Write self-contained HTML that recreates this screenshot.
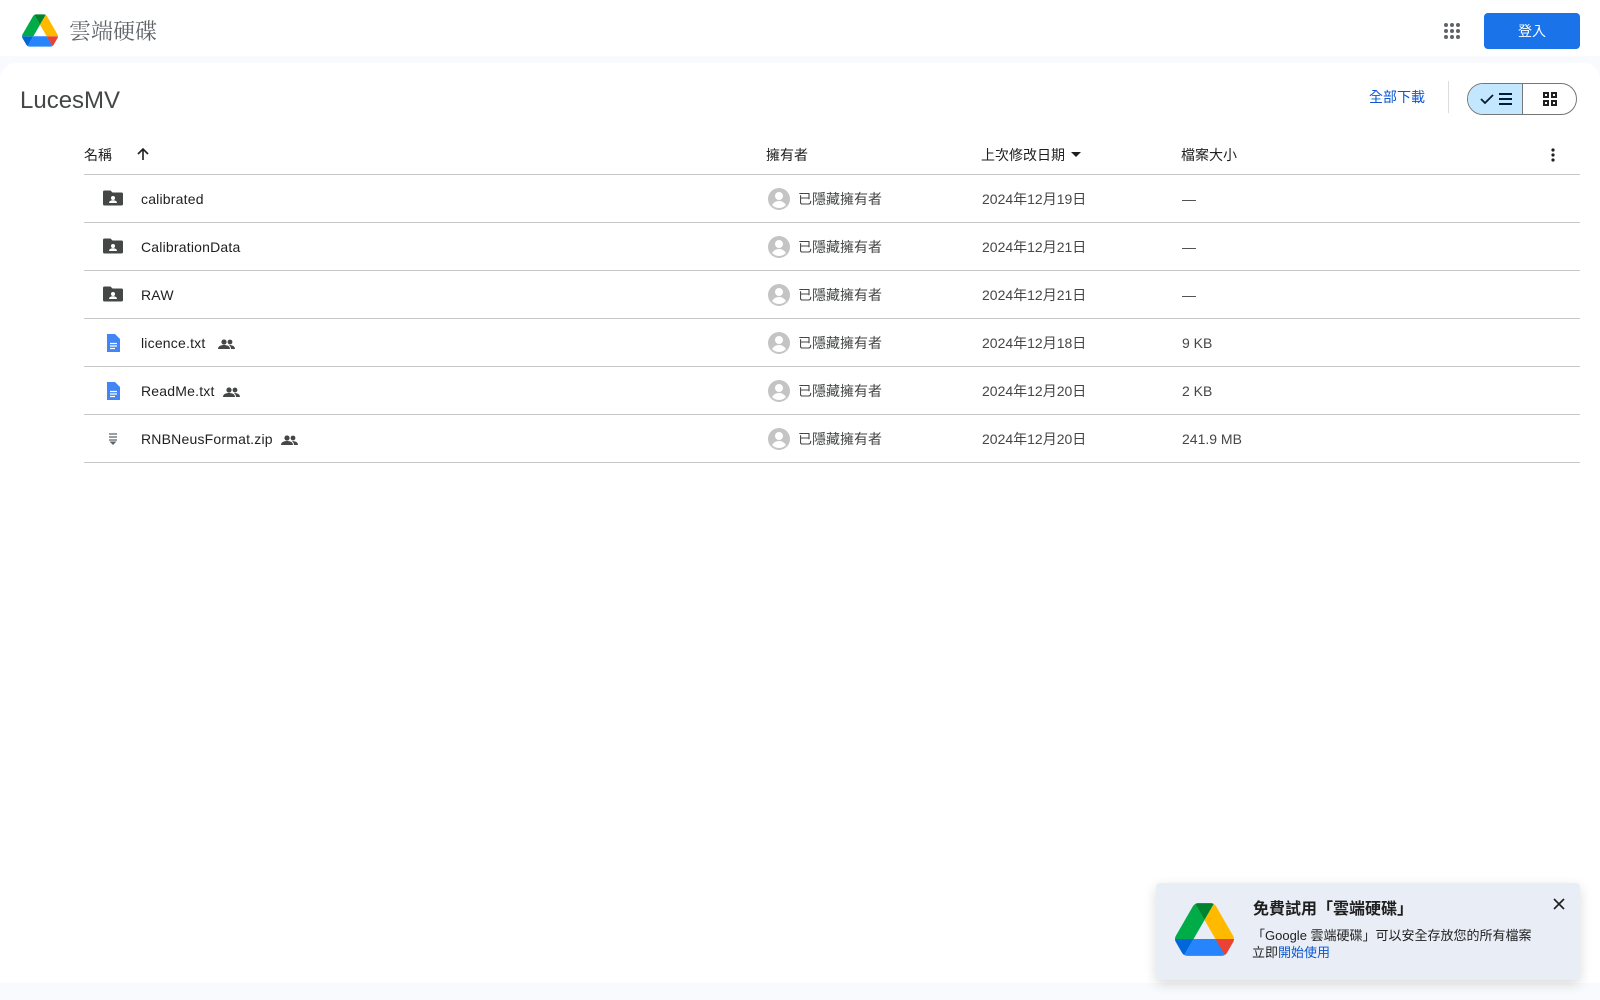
<!DOCTYPE html>
<html><head><meta charset="utf-8"><style>
*{margin:0;padding:0;box-sizing:border-box}
body{width:1600px;height:1000px;background:#fff;font-family:"Liberation Sans","Noto Sans CJK TC",sans-serif;color:#1f1f1f;position:relative;overflow:hidden}
.abs{position:absolute}
.bg{position:absolute;left:0;top:56px;width:1600px;height:944px;background:#f8fafd}
.card{position:absolute;left:0;top:63px;width:1600px;height:920px;background:#fff;border-radius:16px 16px 0 0}
.t{position:absolute;font-size:14px;white-space:nowrap;line-height:20px}
.line{position:absolute;left:84px;width:1496px;height:1px;background:#c7c7c7}
.g{color:#444746}
.n{color:#1f1f1f;letter-spacing:.2px}
</style></head><body>
<div class="bg"></div>
<svg class="abs" style="left:22px;top:14px" width="36" height="33" viewBox="0 0 87.3 78">
<path d="m6.6 66.85 3.85 6.65c.8 1.4 1.95 2.5 3.3 3.3l13.75-23.8h-27.5c0 1.55.4 3.1 1.2 4.5z" fill="#0066da"/>
<path d="m43.65 25-13.75-23.8c-1.35.8-2.5 1.9-3.3 3.3l-25.4 44a9.06 9.06 0 0 0 -1.2 4.5h27.5z" fill="#00ac47"/>
<path d="m73.55 76.8c1.35-.8 2.5-1.9 3.3-3.3l1.6-2.75 7.65-13.25c.8-1.4 1.2-2.95 1.2-4.5h-27.502l5.852 11.5z" fill="#ea4335"/>
<path d="m43.65 25 13.75-23.8c-1.35-.8-2.9-1.2-4.5-1.2h-18.5c-1.6 0-3.15.45-4.5 1.2z" fill="#00832d"/>
<path d="m59.8 53h-32.3l-13.75 23.8c1.35.8 2.9 1.2 4.5 1.2h50.8c1.6 0 3.15-.45 4.5-1.2z" fill="#2684fc"/>
<path d="m73.4 26.5-12.7-22c-.8-1.4-1.95-2.5-3.3-3.3l-13.75 23.8 16.150 28h27.45c0-1.55-.4-3.1-1.2-4.5z" fill="#ffba00"/>
</svg>
<div class="t" style="left:69px;top:16px;font-size:22px;line-height:30px;color:#5f6368;font-family:'Noto Serif CJK SC',serif">雲端硬碟</div>
<svg class="abs" style="left:1443px;top:22px" width="18" height="18" viewBox="0 0 18 18" fill="#5f6368">
<circle cx="3" cy="3" r="2"/><circle cx="9" cy="3" r="2"/><circle cx="15" cy="3" r="2"/><circle cx="3" cy="9" r="2"/><circle cx="9" cy="9" r="2"/><circle cx="15" cy="9" r="2"/><circle cx="3" cy="15" r="2"/><circle cx="9" cy="15" r="2"/><circle cx="15" cy="15" r="2"/></svg>
<div class="abs" style="left:1484px;top:13px;width:96px;height:36px;background:#1a73e8;border-radius:4px;color:#fff;font-size:14px;text-align:center;line-height:36px">登入</div>
<div class="card"></div>
<div class="t" style="left:20px;top:86px;font-size:24px;line-height:30px;color:#444746">LucesMV</div>
<div class="t" style="left:1369px;top:87px;color:#0b57d0">全部下載</div>
<div class="abs" style="left:1448px;top:81px;width:1px;height:32px;background:#dadce0"></div>
<div class="abs" style="left:1467px;top:83px;width:110px;height:32px;border:1px solid #747775;border-radius:16px;overflow:hidden">
<div class="abs" style="left:0;top:0;width:55px;height:30px;background:#c2e7ff;border-right:1px solid #747775"></div>
<svg class="abs" style="left:11px;top:7px" width="34" height="16" viewBox="0 0 34 16"><path d="M2 8l4 4 8-8" stroke="#001d35" stroke-width="1.8" fill="none"/><path d="M20 3h13M20 8h13M20 13h13" stroke="#001d35" stroke-width="2"/></svg>
<svg class="abs" style="left:75px;top:8px" width="14" height="14" viewBox="0 0 14 14" fill="none" stroke="#1f1f1f" stroke-width="2"><rect x="1" y="1" width="4" height="4"/><rect x="9" y="1" width="4" height="4"/><rect x="1" y="9" width="4" height="4"/><rect x="9" y="9" width="4" height="4"/></svg>
</div>
<div class="t" style="left:84px;top:145px">名稱</div>
<svg class="abs" style="left:135px;top:146px" width="16" height="16" viewBox="0 0 16 16"><path d="M8 14V3M3 8l5-5 5 5" stroke="#1f1f1f" stroke-width="1.6" fill="none"/></svg>
<div class="t" style="left:766px;top:145px">擁有者</div>
<div class="t" style="left:981px;top:145px">上次修改日期</div>
<svg class="abs" style="left:1071px;top:152px" width="10" height="6"><path d="M0 0h10L5 5z" fill="#1f1f1f"/></svg>
<div class="t" style="left:1181px;top:145px">檔案大小</div>
<svg class="abs" style="left:1551px;top:147px" width="4" height="16"><circle cx="2" cy="3" r="1.6" fill="#1f1f1f"/><circle cx="2" cy="8" r="1.6" fill="#1f1f1f"/><circle cx="2" cy="13" r="1.6" fill="#1f1f1f"/></svg>
<div class="line" style="top:174px"></div>

<svg width="0" height="0" style="position:absolute"><defs>
<g id="folder"><path d="M1 4a1.5 1.5 0 0 1 1.5-1.5h6l2 2h9a1.5 1.5 0 0 1 1.5 1.5v10a1.5 1.5 0 0 1-1.5 1.5h-17a1.5 1.5 0 0 1-1.5-1.5z" fill="#444746"/><circle cx="11" cy="10" r="2" fill="#fff"/><path d="M7 15c0-2 2-2.8 4-2.8s4 .8 4 2.8z" fill="#fff"/></g>
<g id="doc"><path d="M5 2h8l5 5v13H5z" fill="#4285f4"/><path d="M8 11.5h7M8 14h7M8 16.5h5" stroke="#fff" stroke-width="1.3"/></g>
<g id="zip"><path d="M7 6h8M7 9h8M7 12h8" stroke="#5f6368" stroke-width="1.3"/><path d="M7.5 13.5h7l-3.5 3.5z" fill="#5f6368"/></g>
<g id="av"><circle cx="11" cy="11" r="11" fill="#c4c4c4"/><circle cx="11" cy="8" r="4" fill="#fff"/><path d="M4 17c2-3 4.5-4 7-4s5 1 7 4c-2 2-4.5 3-7 3s-5-1-7-3z" fill="#fff"/></g>
<g id="pp"><circle cx="6" cy="4" r="2.6" fill="#444746"/><circle cx="12" cy="4" r="2.4" fill="#444746"/><path d="M0 11c0-3 3-4 6-4s6 1 6 4zM13 11c0-2-1-3-2-4 3 0 6 1 6 4z" fill="#444746"/></g>
</defs></svg>

<svg class="abs" style="left:102px;top:188px" width="22" height="22"><use href="#folder"/></svg>
<div class="t n" style="left:141px;top:189px">calibrated</div>
<svg class="abs" style="left:768px;top:188px" width="22" height="22"><use href="#av"/></svg>
<div class="t g" style="left:798px;top:189px">已隱藏擁有者</div>
<div class="t g" style="left:982px;top:189px">2024年12月19日</div>
<div class="t g" style="left:1182px;top:189px">—</div>
<div class="line" style="top:222px"></div>

<svg class="abs" style="left:102px;top:236px" width="22" height="22"><use href="#folder"/></svg>
<div class="t n" style="left:141px;top:237px">CalibrationData</div>
<svg class="abs" style="left:768px;top:236px" width="22" height="22"><use href="#av"/></svg>
<div class="t g" style="left:798px;top:237px">已隱藏擁有者</div>
<div class="t g" style="left:982px;top:237px">2024年12月21日</div>
<div class="t g" style="left:1182px;top:237px">—</div>
<div class="line" style="top:270px"></div>

<svg class="abs" style="left:102px;top:284px" width="22" height="22"><use href="#folder"/></svg>
<div class="t n" style="left:141px;top:285px">RAW</div>
<svg class="abs" style="left:768px;top:284px" width="22" height="22"><use href="#av"/></svg>
<div class="t g" style="left:798px;top:285px">已隱藏擁有者</div>
<div class="t g" style="left:982px;top:285px">2024年12月21日</div>
<div class="t g" style="left:1182px;top:285px">—</div>
<div class="line" style="top:318px"></div>

<svg class="abs" style="left:102px;top:332px" width="22" height="22"><use href="#doc"/></svg>
<div class="t n" style="left:141px;top:333px">licence.txt</div>
<svg class="abs" style="left:218px;top:338px" width="17" height="11"><use href="#pp"/></svg>
<svg class="abs" style="left:768px;top:332px" width="22" height="22"><use href="#av"/></svg>
<div class="t g" style="left:798px;top:333px">已隱藏擁有者</div>
<div class="t g" style="left:982px;top:333px">2024年12月18日</div>
<div class="t g" style="left:1182px;top:333px">9 KB</div>
<div class="line" style="top:366px"></div>

<svg class="abs" style="left:102px;top:380px" width="22" height="22"><use href="#doc"/></svg>
<div class="t n" style="left:141px;top:381px">ReadMe.txt</div>
<svg class="abs" style="left:223px;top:386px" width="17" height="11"><use href="#pp"/></svg>
<svg class="abs" style="left:768px;top:380px" width="22" height="22"><use href="#av"/></svg>
<div class="t g" style="left:798px;top:381px">已隱藏擁有者</div>
<div class="t g" style="left:982px;top:381px">2024年12月20日</div>
<div class="t g" style="left:1182px;top:381px">2 KB</div>
<div class="line" style="top:414px"></div>

<svg class="abs" style="left:102px;top:428px" width="22" height="22"><use href="#zip"/></svg>
<div class="t n" style="left:141px;top:429px">RNBNeusFormat.zip</div>
<svg class="abs" style="left:281px;top:434px" width="17" height="11"><use href="#pp"/></svg>
<svg class="abs" style="left:768px;top:428px" width="22" height="22"><use href="#av"/></svg>
<div class="t g" style="left:798px;top:429px">已隱藏擁有者</div>
<div class="t g" style="left:982px;top:429px">2024年12月20日</div>
<div class="t g" style="left:1182px;top:429px">241.9 MB</div>
<div class="line" style="top:462px"></div>

<div class="abs" style="left:1156px;top:883px;width:424px;height:97px;background:#e9eef6;border-radius:4px;box-shadow:0 4px 12px rgba(0,0,0,.15)"></div>
<svg class="abs" style="left:1175px;top:903px" width="59" height="53" viewBox="0 0 87.3 78">
<path d="m6.6 66.85 3.85 6.65c.8 1.4 1.95 2.5 3.3 3.3l13.75-23.8h-27.5c0 1.55.4 3.1 1.2 4.5z" fill="#0066da"/>
<path d="m43.65 25-13.75-23.8c-1.35.8-2.5 1.9-3.3 3.3l-25.4 44a9.06 9.06 0 0 0 -1.2 4.5h27.5z" fill="#00ac47"/>
<path d="m73.55 76.8c1.35-.8 2.5-1.9 3.3-3.3l1.6-2.75 7.65-13.25c.8-1.4 1.2-2.95 1.2-4.5h-27.502l5.852 11.5z" fill="#ea4335"/>
<path d="m43.65 25 13.75-23.8c-1.35-.8-2.9-1.2-4.5-1.2h-18.5c-1.6 0-3.15.45-4.5 1.2z" fill="#00832d"/>
<path d="m59.8 53h-32.3l-13.75 23.8c1.35.8 2.9 1.2 4.5 1.2h50.8c1.6 0 3.15-.45 4.5-1.2z" fill="#2684fc"/>
<path d="m73.4 26.5-12.7-22c-.8-1.4-1.95-2.5-3.3-3.3l-13.75 23.8 16.15 28h27.45c0-1.55-.4-3.1-1.2-4.5z" fill="#ffba00"/>
</svg>
<div class="t" style="left:1253px;top:899px;font-size:16px;line-height:22px;font-weight:bold">免費試用「雲端硬碟」</div>
<div class="t" style="left:1252px;top:927px;font-size:13px;line-height:17px;color:#1f1f1f">「Google 雲端硬碟」可以安全存放您的所有檔案</div>
<div class="t" style="left:1252px;top:944px;font-size:13px;line-height:17px">立即<span style="color:#0b57d0">開始使用</span></div>
<svg class="abs" style="left:1553px;top:898px" width="12" height="12"><path d="M1 1l10 10M11 1L1 11" stroke="#1f1f1f" stroke-width="1.6"/></svg>
</body></html>
